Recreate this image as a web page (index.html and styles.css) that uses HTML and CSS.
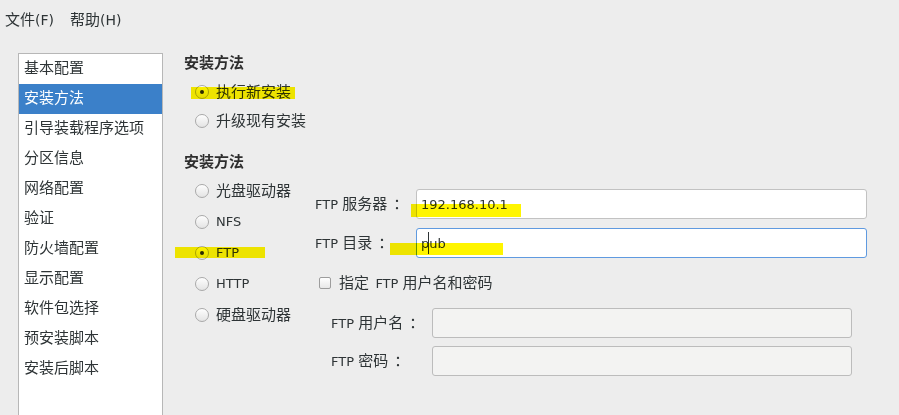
FILE: index.html
```html
<!DOCTYPE html>
<html lang="zh-CN">
<head>
<meta charset="utf-8">
<title>Kickstart 配置</title>
<link rel="stylesheet" href="styles.css">
</head>
<body>
<div class="app">
  <div class="menubar">
    <span class="menu">文件<span class="lat menu-lat">(F)</span></span>
    <span class="menu">帮助<span class="lat menu-lat">(H)</span></span>
  </div>
  <div class="main">
    <ul class="sidebar">
      <li>基本配置</li>
      <li class="selected">安装方法</li>
      <li>引导装载程序选项</li>
      <li>分区信息</li>
      <li>网络配置</li>
      <li>验证</li>
      <li>防火墙配置</li>
      <li>显示配置</li>
      <li>软件包选择</li>
      <li>预安装脚本</li>
      <li>安装后脚本</li>
    </ul>
    <div class="content">
      <div class="heading">安装方法</div>
      <div class="options">
        <div class="radio"><span class="dot checked"></span><span class="cjk">执行新安装</span></div>
        <div class="radio"><span class="dot"></span><span class="cjk">升级现有安装</span></div>
      </div>
      <div class="heading second">安装方法</div>
      <div class="method">
        <div class="methods">
          <div class="radio"><span class="dot"></span><span class="cjk">光盘驱动器</span></div>
          <div class="radio"><span class="dot"></span><span class="lat">NFS</span></div>
          <div class="radio"><span class="dot checked"></span><span class="lat">FTP</span></div>
          <div class="radio"><span class="dot"></span><span class="lat">HTTP</span></div>
          <div class="radio"><span class="dot"></span><span class="cjk">硬盘驱动器</span></div>
        </div>
        <div class="ftp">
          <div class="field">
            <span class="label"><span class="lat">FTP </span>服务器<span class="colon">：</span></span>
            <div class="input"><span class="lat">192.168.10.1</span></div>
          </div>
          <div class="field">
            <span class="label"><span class="lat">FTP </span>目录<span class="colon">：</span></span>
            <div class="input focused"><span class="lat">p</span><span class="caret"></span><span class="lat">ub</span></div>
          </div>
          <div class="check">
            <span class="box"></span>
            <span>指定 <span class="lat sp">FTP </span>用户名和密码</span>
          </div>
          <div class="sub">
            <div class="field">
              <span class="label"><span class="lat">FTP </span>用户名<span class="colon">：</span></span>
              <div class="input disabled"></div>
            </div>
            <div class="field">
              <span class="label"><span class="lat">FTP </span>密码<span class="colon">：</span></span>
              <div class="input disabled"></div>
            </div>
          </div>
        </div>
      </div>
    </div>
  </div>
  <div class="mark mark-new"></div>
  <div class="mark mark-ftp"></div>
  <div class="mark mark-server"></div>
  <div class="mark mark-dir"></div>
</div>
</body>
</html>
```
FILE: styles.css
```css
html, body {
  margin: 0;
  padding: 0;
  background: #ededed;
  overflow: hidden;
}
body {
  font-family: "Noto Sans CJK SC", "DejaVu Sans", sans-serif;
  font-size: 15px;
  color: #2e3436;
  width: 899px;
  height: 415px;
}
.app {
  position: relative;
  width: 899px;
  height: 415px;
  overflow: hidden;
}
.lat {
  font-family: "DejaVu Sans", sans-serif;
  font-size: 13px;
}
.menu-lat {
  font-size: 14px;
}
.colon {
  padding-left: 6px;
}
.cjk {
  padding-bottom: 2px;
}
.menubar {
  height: 38px;
  display: flex;
  align-items: center;
  padding-left: 5px;
  gap: 16px;
  line-height: 18px;
}
.main {
  display: flex;
  padding: 15px 0 0 18px;
}
.sidebar {
  list-style: none;
  margin: 0;
  padding: 0;
  width: 143px;
  height: 380px;
  background: #fff;
  border: 1px solid #b7b7b7;
  flex: none;
}
.sidebar li {
  height: 30px;
  line-height: 26px;
  padding-left: 5px;
  white-space: nowrap;
}
.sidebar li.selected {
  background: #3b80c9;
  color: #fff;
}
.content {
  margin-left: 21px;
}
.heading {
  height: 20px;
  line-height: 18px;
  font-weight: bold;
  color: #2e2e2e;
}
.heading.second {
  margin-top: 17px;
}
.options {
  margin-top: 4px;
}
.radio {
  height: 29px;
  display: flex;
  align-items: center;
  padding-left: 11px;
  gap: 7px;
  line-height: 20px;
}
.dot {
  width: 14px;
  height: 14px;
  box-sizing: border-box;
  border-radius: 50%;
  border: 1px solid #a9a9a9;
  background: linear-gradient(#fdfdfd, #e4e4e4);
  box-shadow: inset 0 1px 0 #fff;
  position: relative;
  flex: none;
}
.dot.checked::after {
  content: "";
  position: absolute;
  left: 4px;
  top: 4px;
  width: 4px;
  height: 4px;
  border-radius: 50%;
  background: #2a2a2a;
}
.method {
  display: flex;
  margin-top: 3px;
}
.methods {
  width: 131px;
  flex: none;
}
.methods .radio {
  height: 31px;
}
.ftp {
  margin-top: 14px;
  width: 552px;
}
.field {
  display: flex;
  align-items: center;
}
.field + .field {
  margin-top: 9px;
}
.label {
  width: 101px;
  flex: none;
  line-height: 20px;
  white-space: nowrap;
}
.input {
  width: 451px;
  height: 30px;
  box-sizing: border-box;
  border: 1px solid #c2c2c2;
  border-radius: 3px;
  background: #fff;
  display: flex;
  align-items: center;
  padding-left: 4px;
  color: #2e3436;
}
.input.focused {
  border-color: #5f9ae0;
}
.caret {
  display: inline-block;
  width: 1px;
  height: 22px;
  background: #2e3436;
  margin: 0 0 0 -1px;
}
.check {
  margin-top: 15px;
  height: 20px;
  display: flex;
  align-items: center;
  padding-left: 4px;
  gap: 8px;
  line-height: 20px;
}
.box {
  width: 12px;
  height: 12px;
  box-sizing: border-box;
  border: 1px solid #9d9d9d;
  border-radius: 2px;
  background: linear-gradient(#fff, #e8e8e8);
  flex: none;
}
.sp {
  margin-left: 3px;
}
.sub {
  margin-top: 15px;
  padding-left: 16px;
}
.sub .field + .field {
  margin-top: 8px;
}
.sub .input {
  width: 420px;
}
.input.disabled {
  background: #f3f3f2;
  border-color: #bcbcbc;
}
.mark {
  position: absolute;
  background: #fff500;
  mix-blend-mode: multiply;
}
.mark-new {
  left: 191px;
  top: 87px;
  width: 104px;
  height: 12px;
}
.mark-ftp {
  left: 175px;
  top: 247px;
  width: 90px;
  height: 11px;
}
.mark-server {
  left: 411px;
  top: 204px;
  width: 110px;
  height: 13px;
}
.mark-dir {
  left: 390px;
  top: 243px;
  width: 113px;
  height: 12px;
}
```
